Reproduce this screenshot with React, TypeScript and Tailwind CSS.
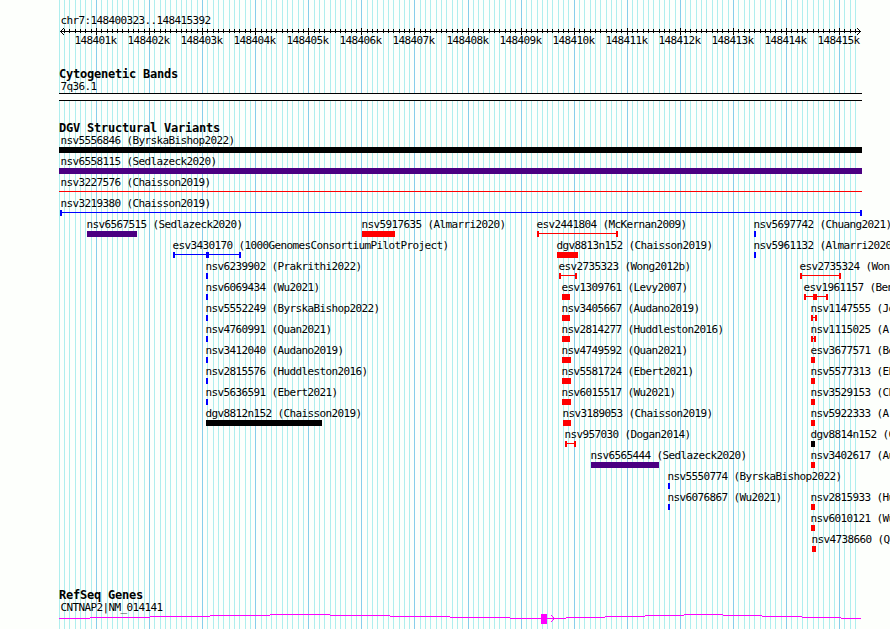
type Feature = {
  name: string;
  start: number;
  end: number;
  color: string;
  shape?: "bar" | "line" | "span";
  box?: [number, number];
};

const RED = "bg-[#ff0000]";
const BLUE = "bg-[#0000ff]";
const INDIGO = "bg-[#4b0082]";
const BLACK = "bg-black";

const REGION_START = 148400323;
const REGION_END = 148415392;
const PANEL_LEFT = 60;
const PANEL_WIDTH = 800;

const toX = (pos: number) =>
  Math.round(
    PANEL_LEFT +
      ((pos - REGION_START) * PANEL_WIDTH) / (REGION_END - REGION_START + 1)
  );

const ticks = Array.from({ length: 151 }, (_, i) => {
  const pos = 148400300 + i * 100;
  return { pos, x: toX(pos), major: pos % 1000 === 0 };
});

const majorTicks = ticks.filter((tick) => tick.major);

const rows: Feature[][] = [
  [{ name: "nsv5556846 (ByrskaBishop2022)", start: 59, end: 862, color: BLACK }],
  [{ name: "nsv6558115 (Sedlazeck2020)", start: 59, end: 862, color: INDIGO }],
  [{ name: "nsv3227576 (Chaisson2019)", start: 59, end: 862, color: RED, shape: "line" }],
  [{ name: "nsv3219380 (Chaisson2019)", start: 60, end: 862, color: BLUE, shape: "span" }],
  [
    { name: "nsv6567515 (Sedlazeck2020)", start: 87, end: 137, color: INDIGO },
    { name: "nsv5917635 (Almarri2020)", start: 362, end: 395, color: RED },
    { name: "esv2441804 (McKernan2009)", start: 537, end: 618, color: RED, shape: "span" },
    { name: "nsv5697742 (Chuang2021)", start: 754, end: 756, color: BLUE },
  ],
  [
    {
      name: "esv3430170 (1000GenomesConsortiumPilotProject)",
      start: 173,
      end: 241,
      color: BLUE,
      shape: "span",
      box: [206, 209],
    },
    { name: "dgv8813n152 (Chaisson2019)", start: 557, end: 578, color: RED },
    { name: "nsv5961132 (Almarri2020", start: 754, end: 756, color: BLUE },
  ],
  [
    { name: "nsv6239902 (Prakrithi2022)", start: 206, end: 208, color: BLUE },
    { name: "esv2735323 (Wong2012b)", start: 559, end: 577, color: RED, shape: "span" },
    { name: "esv2735324 (Won", start: 800, end: 841, color: RED, shape: "span" },
  ],
  [
    { name: "nsv6069434 (Wu2021)", start: 206, end: 208, color: BLUE },
    { name: "esv1309761 (Levy2007)", start: 562, end: 570, color: RED },
    {
      name: "esv1961157 (Ben",
      start: 804,
      end: 828,
      color: RED,
      shape: "span",
      box: [813, 817],
    },
  ],
  [
    { name: "nsv5552249 (ByrskaBishop2022)", start: 206, end: 208, color: BLUE },
    { name: "nsv3405667 (Audano2019)", start: 562, end: 570, color: RED },
    { name: "nsv1147555 (Jo", start: 811, end: 817, color: RED, shape: "span" },
  ],
  [
    { name: "nsv4760991 (Quan2021)", start: 206, end: 208, color: BLUE },
    { name: "nsv2814277 (Huddleston2016)", start: 562, end: 570, color: RED },
    { name: "nsv1115025 (A", start: 811, end: 816, color: RED, shape: "span" },
  ],
  [
    { name: "nsv3412040 (Audano2019)", start: 206, end: 208, color: BLUE },
    { name: "nsv4749592 (Quan2021)", start: 562, end: 571, color: RED },
    { name: "esv3677571 (Be", start: 811, end: 815, color: RED },
  ],
  [
    { name: "nsv2815576 (Huddleston2016)", start: 206, end: 208, color: BLUE },
    { name: "nsv5581724 (Ebert2021)", start: 562, end: 571, color: RED },
    { name: "nsv5577313 (Eb", start: 811, end: 815, color: RED },
  ],
  [
    { name: "nsv5636591 (Ebert2021)", start: 206, end: 208, color: BLUE },
    { name: "nsv6015517 (Wu2021)", start: 562, end: 571, color: RED },
    { name: "nsv3529153 (Ch", start: 811, end: 815, color: RED },
  ],
  [
    { name: "dgv8812n152 (Chaisson2019)", start: 206, end: 322, color: BLACK },
    { name: "nsv3189053 (Chaisson2019)", start: 563, end: 571, color: RED },
    { name: "nsv5922333 (A", start: 811, end: 815, color: RED },
  ],
  [
    { name: "nsv957030 (Dogan2014)", start: 565, end: 576, color: RED, shape: "span" },
    { name: "dgv8814n152 (C", start: 811, end: 815, color: BLACK },
  ],
  [
    { name: "nsv6565444 (Sedlazeck2020)", start: 591, end: 659, color: INDIGO },
    { name: "nsv3402617 (Au", start: 811, end: 815, color: RED },
  ],
  [{ name: "nsv5550774 (ByrskaBishop2022)", start: 668, end: 670, color: BLUE }],
  [
    { name: "nsv6076867 (Wu2021)", start: 668, end: 670, color: BLUE },
    { name: "nsv2815933 (Hu", start: 811, end: 815, color: RED },
  ],
  [{ name: "nsv6010121 (Wu", start: 811, end: 815, color: RED }],
  [{ name: "nsv4738660 (Q", start: 812, end: 816, color: RED }],
];

// [x1, x2, y] steps of the gene's intron line
const intronSteps = [
  [59, 90, 4],
  [90, 150, 3],
  [150, 210, 2],
  [210, 270, 1],
  [270, 330, 0],
  [330, 390, 1],
  [390, 450, 2],
  [450, 510, 3],
  [510, 566, 4],
  [566, 605, 3],
  [605, 645, 2],
  [645, 684, 1],
  [684, 723, 0],
  [723, 762, 1],
  [762, 802, 2],
  [802, 841, 3],
  [841, 861, 4],
];

const Gridlines = () => (
  <svg
    className="absolute inset-0"
    width="890"
    height="629"
    shapeRendering="crispEdges"
  >
    {ticks.map((tick) => (
      <rect
        key={tick.pos}
        x={tick.x}
        y="0"
        width="1"
        height="629"
        fill={tick.major ? "#87ceeb" : "#afeeee"}
      />
    ))}
  </svg>
);

const Ruler = () => (
  <div>
    <svg
      className="block"
      width="890"
      height="7"
      shapeRendering="crispEdges"
    >
      <rect x="60" y="3" width="801" height="1" />
      {ticks.slice(1).map((tick) => (
        <rect
          key={tick.pos}
          x={tick.x}
          y={tick.major ? 0 : 1}
          width="1"
          height={tick.major ? 7 : 4}
        />
      ))}
      <path d="M61 2h1v1h-1zM62 1h1v1h-1zM63 0h1v1h-1zM61 4h1v1h-1zM62 5h1v1h-1zM63 6h1v1h-1z" />
      <path d="M859 2h1v1h-1zM858 1h1v1h-1zM857 0h1v1h-1zM859 4h1v1h-1zM858 5h1v1h-1zM857 6h1v1h-1z" />
    </svg>
    <div className="relative -mt-px h-3.5">
      {majorTicks.map((tick) => (
        <span
          key={tick.pos}
          className="absolute top-0"
          style={{ left: tick.x - 21.6 }}
        >
          {tick.pos / 1000}k
        </span>
      ))}
    </div>
  </div>
);

const Title = ({ children }: { children: string }) => (
  <h2 className="h-[13px] pl-[59px] text-[12px] leading-[13px] font-bold tracking-[-0.225px]">
    {children}
  </h2>
);

const Glyph = ({ feature }: { feature: Feature }) => {
  const { start, end, color, shape = "bar", box } = feature;
  const width = end - start;

  if (shape === "bar") {
    return <div className={`h-1.5 ${color}`} style={{ width }} />;
  }

  if (shape === "line") {
    return (
      <div className="h-1.5 pt-0.5">
        <div className={`h-px ${color}`} style={{ width }} />
      </div>
    );
  }

  return (
    <div className="relative flex h-1.5" style={{ width }}>
      <div className={`w-0.5 ${color}`} />
      <div className={`mt-0.5 h-px flex-1 ${color}`} />
      <div className={`w-0.5 ${color}`} />
      {box && (
        <div
          className={`absolute top-0 h-1.5 ${color}`}
          style={{ left: box[0] - start, width: box[1] - box[0] }}
        />
      )}
    </div>
  );
};

const TrackRow = ({ features }: { features: Feature[] }) => (
  <div className="relative h-[21px]">
    {features.map((feature) => (
      <div
        key={feature.name}
        className="absolute top-0"
        style={{ left: feature.start }}
      >
        <div
          className="h-[13px]"
          style={{
            marginLeft: feature.start < 61 ? 60.4 - feature.start : -0.6,
          }}
        >
          {feature.name}
        </div>
        <Glyph feature={feature} />
      </div>
    ))}
  </div>
);

const Gene = () => (
  <svg
    className="block"
    width="890"
    height="10"
    shapeRendering="crispEdges"
    fill="#ff00ff"
  >
    {intronSteps.map(([x1, x2, y]) => (
      <rect key={x1} x={x1} y={y} width={x2 - x1} height="1" />
    ))}
    <rect x="541" y="0" width="6" height="10" />
    <path d="M551 1h1v1h-1zM552 2h1v1h-1zM553 3h1v1h-1zM553 5h1v1h-1zM552 6h1v1h-1zM551 7h1v1h-1z" />
  </svg>
);

const App = () => {
  return (
    <main className="relative h-[629px] w-[890px] overflow-hidden bg-[#fdfffc] font-['DejaVu_Sans_Mono',monospace] text-[11px] leading-[13px] tracking-[-0.622px] whitespace-pre text-black">
      <Gridlines />
      <div className="relative flex flex-col">
        <header className="pt-3.5">
          <p className="h-3.5 pl-[60.4px]">chr7:148400323..148415392</p>
          <Ruler />
        </header>

        <section className="pt-5">
          <Title>Cytogenetic Bands</Title>
          <p className="-mt-px h-[13px] pl-[60.4px]">7q36.1</p>
          <div className="ml-[59px] h-2 w-[803px] border-y border-black bg-[#fdfffc]" />
        </section>

        <section className="pt-[21px]">
          <Title>DGV Structural Variants</Title>
          <div className="-mt-px">
            {rows.map((features) => (
              <TrackRow key={features[0].name} features={features} />
            ))}
          </div>
        </section>

        <section className="pt-[35px]">
          <Title>RefSeq Genes</Title>
          <p className="-mt-px h-[13px] pl-[60.4px]">CNTNAP2|NM_014141</p>
          <Gene />
        </section>
      </div>
    </main>
  );
};

export default App;
